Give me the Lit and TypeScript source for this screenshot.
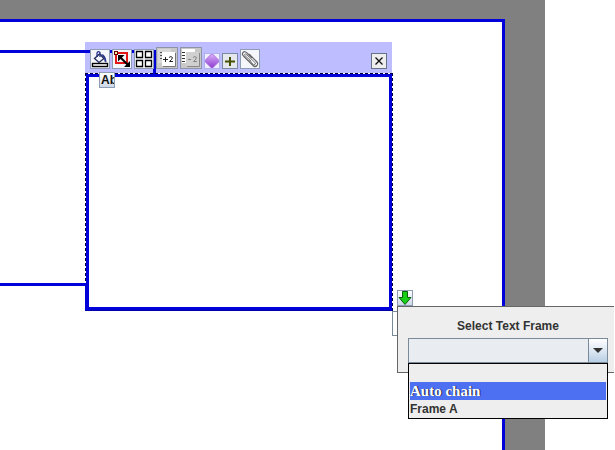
import { LitElement, html, css, svg } from "lit";
import { customElement, property, state } from "lit/decorators.js";
import { classMap } from "lit/directives/class-map.js";

const glyphs: Record<string, unknown> = {
  fill: svg`<svg width="18" height="18" viewBox="0 0 18 18" fill="none">
    <path d="M3.500 8.500 8.500 4 13 8.500 8 12.500Z" fill="#f4f6ff" stroke="#222a55" stroke-width="1.300"/>
    <path d="M6 7V3Q7 .5 9 2.500V7" stroke="#26358c" stroke-width="1.300"/>
    <path d="M10 4Q15 4 15.500 12.500L13.500 11.500 13 8Z" fill="#26358c"/>
    <rect x="1.500" y="13.500" width="15" height="3" fill="#fff" stroke="#000" stroke-width="1.400"/></svg>`,
  resize: svg`<svg width="18" height="18" viewBox="0 0 18 18" fill="none">
    <path d="M3 3H14V13H3Z" stroke="#e01818" stroke-width="2"/>
    <rect x="1.500" y="1.500" width="3" height="3" fill="#ffe9a0" stroke="#600"/>
    <path d="M7 7 15 15" stroke="#000" stroke-width="2"/>
    <path d="M5 5H11.500L5 11.500Z" fill="#000"/><path d="M17 11V17H11Z" fill="#000"/></svg>`,
  grid: svg`<svg width="18" height="18" viewBox="0 0 18 18" fill="#fff" stroke="#000" stroke-width="1.300">
    <path d="M1.500 1.500H7.500V7.500H1.500ZM10.500 1.500H16.500V7.500H10.500ZM1.500 10.500H7.500V16.500H1.500ZM10.500 10.500H16.500V16.500H10.500Z"/></svg>`,
  plus2: svg`<svg width="20" height="20" viewBox="0 0 20 20" fill="none">
    <rect x="1" y="1" width="13" height="14" fill="#d8d8d8"/>
    <path d="M3 4.500H5M3 7.500H5M3 10.500H5" stroke="#555"/>
    <path d="M6 18.500H18.500V5" stroke="#777"/>
    <rect x="5" y="4" width="13" height="14" fill="#fff"/>
    <path d="M6 11.500H11M8.500 9V14M12 9.500Q14 7.500 15.500 9.500Q15.500 11 12.500 13.500H16" stroke="#222"/></svg>`,
  minus2: svg`<svg width="20" height="20" viewBox="0 0 20 20" fill="none">
    <rect x="1" y="1" width="13" height="14" fill="#fff"/>
    <path d="M1 4.500H4M1 7.500H4M1 10.500H4M1 13.500H4" stroke="#333"/>
    <path d="M6 18.500H18.500V5" stroke="#888"/>
    <rect x="5" y="4" width="13" height="14" fill="#d0d0d0"/>
    <path d="M7 11.500H10M12 9.500Q14 7.500 15.500 9.500Q15.500 11 12.500 13.500H16" stroke="#858585"/></svg>`,
  diamond: svg`<svg width="16" height="16" viewBox="0 0 16 16">
    <defs><linearGradient id="g" x2="0" y2="1"><stop stop-color="#dcb4fa"/><stop offset="1" stop-color="#8a35cf"/></linearGradient></defs>
    <path d="M8 .5 15.500 8 8 15.500 .5 8Z" fill="url(#g)" stroke="#a66bdd"/></svg>`,
  add: svg`<svg width="14" height="14" viewBox="0 0 14 14" fill="none">
    <path d="M7 3V12M2 7.500H12" stroke="#465000" stroke-width="2"/></svg>`,
  clip: svg`<svg width="18" height="18" viewBox="0 0 18 18" fill="none" stroke-linecap="round">
    <path d="M10.500 7.500 6.500 3.500Q4 .5 2 2.500Q.5 4.500 3 6.500L12 15.500Q14 17.500 16 15.500Q17.500 13.500 15.500 11.500L8.500 4.500" stroke="#666" stroke-width="1.200"/>
    <path d="M8 10.500 12.500 14.500Q14.500 15 14.500 13L6 5Q4 3 3.500 4.500Q3.500 5.500 5 6.500L10 11" stroke="#777"/></svg>`,
  close: svg`<svg width="14" height="14" viewBox="0 0 14 14" fill="none">
    <path d="M3.500 3.500 10.500 10.500M10.500 3.500 3.500 10.500" stroke="#111" stroke-width="1.300"/></svg>`,
  down: svg`<svg width="14" height="14" viewBox="0 0 14 14">
    <path d="M4.500 .5H9.500V6.500H13L7 13.500 1 6.500H4.500Z" fill="#18cf18" stroke="#085f08"/></svg>`,
};

@customElement("tool-button")
class ToolButton extends LitElement {
  @property() icon = "";
  @property() label = "";
  @property() variant = "medium";

  static styles = css`
    :host { display: block; }
    button {
      display: flex; align-items: center; justify-content: center;
      box-sizing: border-box; padding: 0; overflow: hidden;
      border: 1px solid #8c9cb4; border-radius: 0;
      font: bold 12px/14px "Liberation Sans", Arial, sans-serif; color: #111;
    }
    svg { flex: none; display: block; }
    .medium { width: 20px; height: 20px; background: #f4f6fb; }
    .large { width: 22px; height: 22px; background: #c8c8c8; border-color: #8c94a8; }
    .small { width: 16px; height: 16px; background: linear-gradient(#fff, #ccd8e6); }
    .text {
      width: 16px; height: 16px; padding-left: 1px; justify-content: flex-start;
      background: linear-gradient(#fff, #ccd8e6);
    }
    .flat { width: 16px; height: 16px; background: #e4e8ec; border-color: #788aa0; }
    .plain { width: 16px; height: 16px; background: #eef; border-color: #b0b0ee; }
    .close { width: 16px; height: 16px; background: #eee; border-color: #667384; }
  `;

  render() {
    return html`<button class=${this.variant} aria-label=${this.label}>
      ${this.icon ? glyphs[this.icon] : html`<slot></slot>`}
    </button>`;
  }
}

@customElement("frame-picker")
class FramePicker extends LitElement {
  @state() private active = 1;
  private options = ["", "Auto chain", "Frame A"];

  static styles = css`
    :host {
      display: block; box-sizing: border-box; height: 67px;
      padding: 10px 6px 0 10px; background: #eee;
      border: solid #666; border-width: 1px 0 1px 1px;
      font: bold 12px/18px "Liberation Sans", Arial, sans-serif; color: #333;
    }
    label { display: block; text-align: center; margin-bottom: 3px; }
    .combo { display: flex; position: relative; height: 25px; }
    select {
      appearance: none; box-sizing: border-box; width: 100%; height: 25px;
      border: 1px solid #7a8a99; border-radius: 0; margin: 0; padding: 0 20px 0 2px;
      background: #e9edf2; font: inherit; color: inherit; outline: none;
    }
    .arrow {
      position: absolute; right: 0; top: 0; width: 20px; height: 25px;
      box-sizing: border-box; border: 1px solid #7a8a99; pointer-events: none;
      background: linear-gradient(#fff, #dde8f3 50%, #b8cfe5);
      display: flex; align-items: center; justify-content: center;
    }
    ul {
      position: relative; list-style: none; margin: 0; padding: 0;
      border: 1px solid #000; background: #eee;
    }
    li { height: 18px; padding: 0 1px; cursor: default; }
    .active {
      margin: 0 1px; padding: 0; background: #4d6ff2; color: #fff;
      font: bold 15px/18px "Liberation Serif", serif;
      text-shadow: 1px 0 #223;
    }
  `;

  render() {
    return html`
      <label for="frame">Select Text Frame</label>
      <div class="combo">
        <select id="frame">${this.options.map((o) => html`<option>${o}</option>`)}</select>
        <span class="arrow"><svg width="10" height="5"><path d="M0 0H10L5 5Z" fill="#333"/></svg></span>
      </div>
      <ul role="listbox" aria-label="Select Text Frame">
        ${this.options.map((o, i) => html`<li role="option"
          aria-selected=${i === this.active}
          class=${classMap({ active: i === this.active })}
          @mouseenter=${() => (this.active = i)}>${o}</li>`)}
      </ul>`;
  }
}

@customElement("app-root")
class AppRoot extends LitElement {
  static styles = css`
    :host {
      display: flow-root; position: relative; min-height: 100vh;
      overflow: hidden; background: #fff;
    }
    .workspace {
      box-sizing: border-box; min-height: 100vh; margin-right: 70px;
      padding: 19px 40px 0 0; background: #808080; display: flex;
    }
    .page {
      flex: 1; background: #fff; border: solid #0000d8; border-width: 3px 3px 0 0;
    }
    .band, .frame, .selected, .toolbar, .text-tab, .chain, .stub, frame-picker {
      position: absolute;
    }
    .band, .toolbar { left: 85px; top: 42px; width: 307px; height: 31px; }
    .band { background: #bdbdff; }
    .frame {
      left: 0; top: 50px; width: 156px; height: 236px; box-sizing: border-box;
      border: 3px solid #0000d8; border-left: 0;
    }
    .selected {
      left: 85px; top: 73px; width: 308px; height: 238px; box-sizing: border-box;
      border: 1px dashed #000040; border-bottom: 1px solid #0000a8;
      background: #0000d8 padding-box; 
    }
    .selected::before {
      content: ""; position: absolute; left: -1px; bottom: -1px;
      width: 1px; height: 28px; background: #0000d8;
    }
    .inner { height: 230px; margin: 3px; background: #fff; }
    .toolbar {
      box-sizing: border-box; display: flex; align-items: flex-end;
      gap: 2px; padding: 0 5px 4px;
    }
    .end { margin-left: auto; }
    .text-tab { left: 99px; top: 72px; }
    .chain { left: 397px; top: 290px; }
    .stub {
      left: 392px; top: 311px; width: 20px; height: 25px; box-sizing: border-box;
      border: 1px solid #7a8a99; background: #fff;
    }
    frame-picker { left: 397px; right: 1px; top: 306px; }
  `;

  private tools = [
    ["fill", "Fill colour", "medium"],
    ["resize", "Resize", "medium"],
    ["grid", "Grid", "medium"],
    ["plus2", "Add two pages", "large"],
    ["minus2", "Remove two pages", "large"],
    ["diamond", "Shape", "plain"],
    ["add", "Add", "flat"],
    ["clip", "Attach", "medium"],
  ];

  render() {
    return html`
      <main class="workspace"><div class="page"></div></main>
      <div class="band"></div>
      <div class="frame"></div>
      <div class="selected"><div class="inner"></div></div>
      <div class="toolbar" role="toolbar" aria-label="Frame tools">
        ${this.tools.map(([icon, label, variant]) => html`
          <tool-button icon=${icon} label=${label} variant=${variant}></tool-button>`)}
        <tool-button class="end" icon="close" label="Close" variant="close"></tool-button>
      </div>
      <tool-button class="text-tab" label="Text" variant="text">Ab</tool-button>
      <div class="stub"></div>
      <tool-button class="chain" icon="down" label="Chain frame" variant="small"></tool-button>
      <frame-picker></frame-picker>`;
  }
}
